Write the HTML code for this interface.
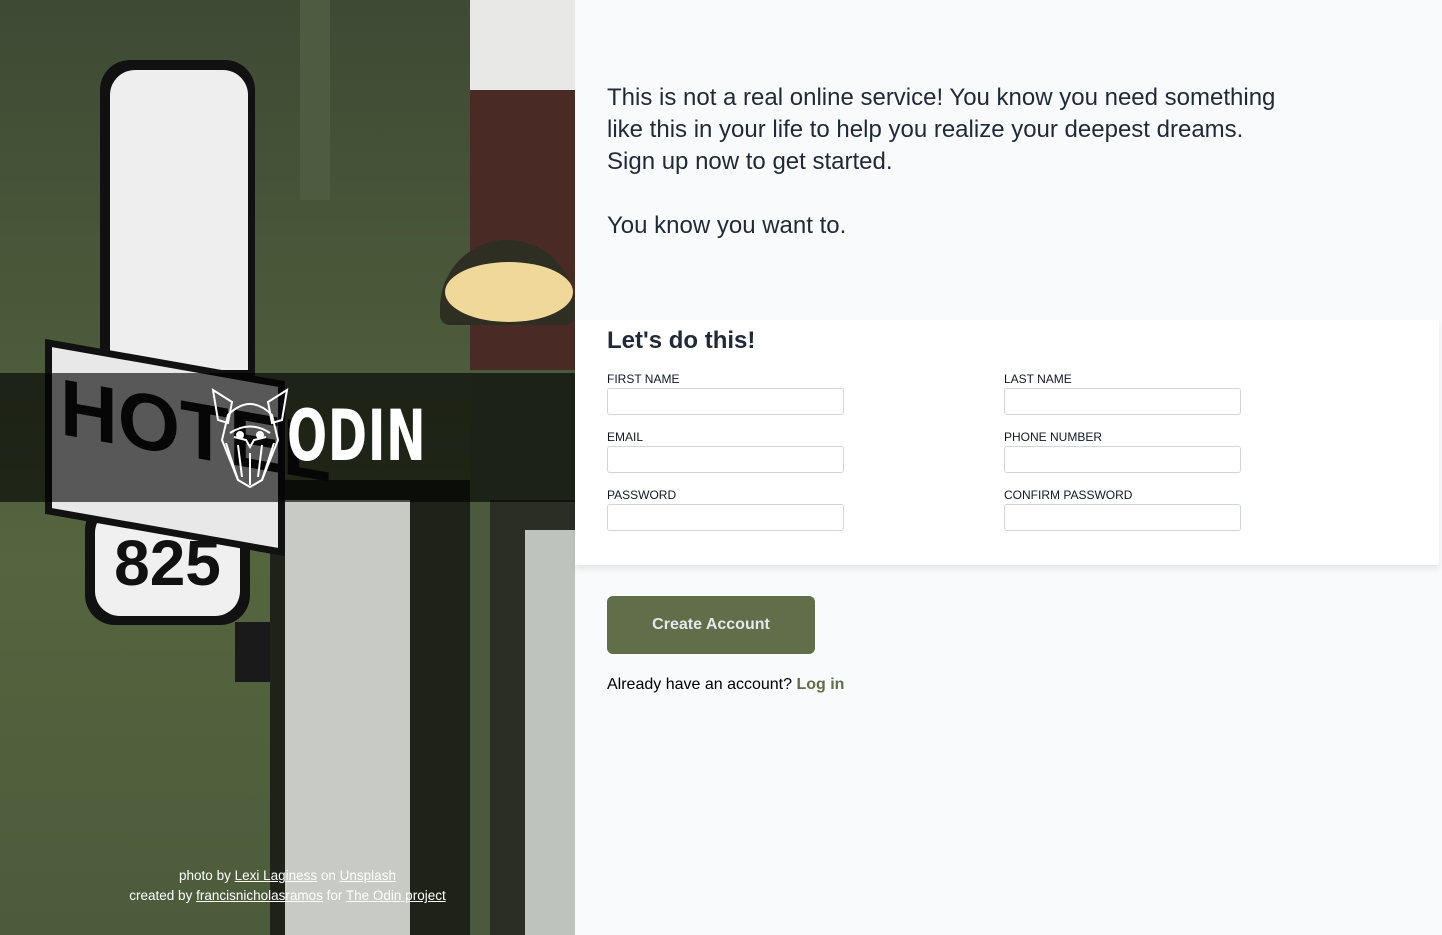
<!DOCTYPE html>
<html><head><meta charset="utf-8"><style>
*{box-sizing:border-box;margin:0;padding:0}
body{width:1442px;height:935px;background:#f9fafb;font-family:"Segoe UI","Liberation Sans",sans-serif;position:relative;overflow:hidden;color:#111827}
#left{position:absolute;left:0;top:0;width:575px;height:935px;background:#4b5a3c;overflow:hidden}
.b{position:absolute}
#right{position:absolute;left:575px;top:0;width:867px;height:935px}
.intro{position:absolute;left:32px;top:82px;font-size:24px;line-height:32px;color:#1f2937;width:680px}
.form{position:absolute;left:0;top:320px;width:864px;height:245px;background:#fff;box-shadow:0 4px 6px rgba(0,0,0,.08)}
.form h2{position:absolute;left:32px;top:7px;font-size:24px;font-weight:700;color:#1f2937}
.f{position:absolute;width:237px}
.f label{display:block;font-size:12px;color:#111827;height:18px;line-height:19px}
.f div{height:27px;border:1px solid #d1d5db;border-radius:3px;background:#fff}
.btn{position:absolute;left:32px;top:596px;width:208px;height:58px;background:#626d4a;border-radius:6px;color:#e5e7eb;font-family:"Liberation Sans",sans-serif;font-weight:700;font-size:16px;text-align:center;line-height:58px}
.login{position:absolute;left:32px;top:676px;font-size:16px;color:#000}
.login b{color:#626d4a}
.cred{position:absolute;left:0;width:575px;text-align:center;color:#fff;font-size:13.5px;line-height:20px;top:866px}
.cred u{text-decoration:underline}
</style></head><body>
<div id="left">
 <div class="b" style="left:0;top:0;width:470px;height:935px;background:linear-gradient(180deg,#3e4a34,#55653f 60%,#4c5b3a)"></div>
 <div class="b" style="left:470px;top:0;width:105px;height:95px;background:#e8e8e6"></div>
 <div class="b" style="left:470px;top:90px;width:105px;height:280px;background:#4a2a24"></div>
 <div class="b" style="left:440px;top:240px;width:135px;height:85px;border-radius:70px 70px 10px 10px;background:#2e2e22"></div>
 <div class="b" style="left:445px;top:262px;width:128px;height:60px;border-radius:50%;background:#f0d79a"></div>
 <div class="b" style="left:300px;top:0;width:30px;height:200px;background:#4f5b41"></div>
 <div class="b" style="left:100px;top:60px;width:155px;height:320px;background:#111;border-radius:30px 30px 0 0"></div>
 <div class="b" style="left:110px;top:70px;width:138px;height:300px;background:#eeeeee;border-radius:25px 25px 0 0"></div>
 <div class="b" style="left:270px;top:480px;width:200px;height:455px;background:#1e2218"></div>
 <div class="b" style="left:285px;top:500px;width:125px;height:435px;background:#c8cac6"></div>
 <div class="b" style="left:490px;top:500px;width:85px;height:435px;background:#2a2e24"></div>
 <div class="b" style="left:525px;top:530px;width:50px;height:405px;background:#bfc3bd"></div>
 <div class="b" style="left:85px;top:500px;width:165px;height:125px;background:#111;border-radius:30px"></div>
 <div class="b" style="left:95px;top:508px;width:145px;height:108px;background:#f0f0f0;border-radius:25px;font:bold 64px 'Liberation Sans',sans-serif;color:#111;text-align:center;line-height:110px">825</div>
 <div class="b" style="left:235px;top:622px;width:35px;height:60px;background:#1a1a1a"></div>
 <div class="b" style="left:45px;top:360px;width:240px;height:175px;background:#111;transform:skewY(10deg)"></div>
 <div class="b" style="left:52px;top:367px;width:226px;height:161px;background:#e8e8e8;transform:skewY(10deg)"></div>
 <div class="b" style="left:60px;top:385px;font:bold 80px 'Liberation Sans',sans-serif;color:#111;transform:skewY(10deg)">HOTEL</div>
 <div class="b" style="left:0;top:373px;width:575px;height:129px;background:rgba(0,0,0,.62)"></div>
 <svg class="b" style="left:210px;top:385px" width="80" height="105" viewBox="0 0 80 105" fill="none" stroke="#fff" stroke-width="2">
  <path d="M3 5 L22 17 L18 38 L8 35 Z M77 5 L58 17 L62 38 L72 35 Z"/>
  <path d="M18 30 Q40 8 62 30 L68 55 L52 95 L40 102 L28 95 L12 55 Z"/>
  <path d="M20 48 Q40 35 60 48 M24 52 L36 55 L40 62 L44 55 L56 52 M28 60 L32 92 M52 60 L48 92 M40 68 L40 100 M16 58 L28 95 M64 58 L52 95"/>
  <circle cx="30" cy="50" r="3" fill="#fff"/><circle cx="50" cy="50" r="3" fill="#fff"/>
 </svg>
 <div class="b" style="left:287px;top:395px;font:bold 70px 'DejaVu Sans Condensed','Liberation Sans Narrow',sans-serif;color:#fff;letter-spacing:1px;transform:scaleX(.75);transform-origin:left">ODIN</div>
 <div class="cred">photo by <u>Lexi Laginess</u> on <u>Unsplash</u><br>created by <u>francisnicholasramos</u> for <u>The Odin project</u></div>
</div>
<div id="right">
 <div class="intro">This is not a real online service! You know you need something like this in your life to help you realize your deepest dreams.<br>Sign up now to get started.<br><br>You know you want to.</div>
 <div class="form">
  <h2>Let's do this!</h2>
  <div class="f" style="left:32px;top:50px"><label>FIRST NAME</label><div></div></div>
  <div class="f" style="left:429px;top:50px"><label>LAST NAME</label><div></div></div>
  <div class="f" style="left:32px;top:108px"><label>EMAIL</label><div></div></div>
  <div class="f" style="left:429px;top:108px"><label>PHONE NUMBER</label><div></div></div>
  <div class="f" style="left:32px;top:166px"><label>PASSWORD</label><div></div></div>
  <div class="f" style="left:429px;top:166px"><label>CONFIRM PASSWORD</label><div></div></div>
 </div>
 <div class="btn">Create Account</div>
 <div class="login">Already have an account? <b>Log in</b></div>
</div>
</body></html>
